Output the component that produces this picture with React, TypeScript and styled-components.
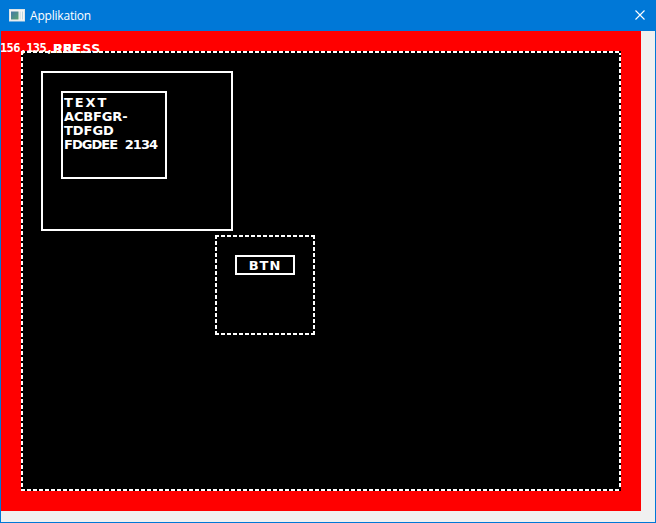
import React from "react";
import styled, { createGlobalStyle } from "styled-components";

const GlobalStyle = createGlobalStyle`
  html, body { margin: 0; background: #f0f0f0; }
  * { box-sizing: border-box; }
`;

const Window = styled.div`
  width: 656px;
  height: 523px;
  display: flex;
  flex-direction: column;
  background: #f0f0f0;
  border: 1px solid #0078d7;
  overflow: hidden;
`;

const TitleBar = styled.header`
  height: 30px;
  flex: none;
  display: flex;
  align-items: center;
  padding: 0 9px 0 8px;
  background: #0078d7;
  color: #fff;
`;

const Title = styled.h1`
  flex: 1;
  margin: 0 0 0 5px;
  font: 400 12px/16px "Open Sans", "Noto Sans", sans-serif;
  letter-spacing: -0.2px;
`;

const CloseButton = styled.button`
  width: 12px;
  height: 12px;
  margin-top: -2px;
  padding: 0;
  border: 0;
  background: none;
  display: flex;
`;

const Canvas = styled.main`
  position: relative;
  display: flex;
  width: 640px;
  height: 480px;
  padding: 20px;
  background: #f00;
  font-family: "DejaVu Sans", sans-serif;
  font-weight: 700;
  font-size: 13px;
  color: #fff;
`;

const dashes = (angle: number) =>
  `repeating-linear-gradient(${angle}deg, #fff 0 4px, #000 4px 6px)`;

const DashedFrame = styled.section`
  padding: 20px;
  background:
    ${dashes(90)} 0 0 / 100% 2px no-repeat,
    ${dashes(90)} 0 100% / 100% 2px no-repeat,
    ${dashes(180)} 0 0 / 2px 100% no-repeat,
    ${dashes(180)} 100% 0 / 2px 100% no-repeat,
    #000;
`;

const RootPanel = styled(DashedFrame)`
  flex: 1;
  display: flex;
  flex-direction: column;
  align-items: flex-start;
  gap: 4px;
`;

const ButtonPanel = styled(DashedFrame)`
  width: 100px;
  height: 100px;
  margin-left: 174px;
`;

const SolidFrame = styled.section`
  width: 192px;
  height: 160px;
  padding: 18px;
  border: 2px solid #fff;
  background: #000;
`;

const TextArea = styled.div`
  width: 106px;
  height: 88px;
  padding: 2px 0 0 1px;
  border: 2px solid #fff;
`;

const Line = styled.div<{ $spacing: number }>`
  height: 14px;
  line-height: 15px;
  white-space: pre;
  letter-spacing: ${(p) => p.$spacing}px;
  word-spacing: 4px;
`;

const PanelButton = styled.button`
  width: 60px;
  height: 20px;
  display: flex;
  align-items: center;
  justify-content: center;
  padding: 1px 0 0 0;
  border: 2px solid #fff;
  background: #000;
  color: #fff;
  font: inherit;
  line-height: 15px;
  letter-spacing: 1px;
`;

const StatusOverlay = styled.div`
  position: absolute;
  inset: 10px auto auto -1px;
  display: grid;
  grid-template-columns: 53px auto;
  font-size: 12.5px;
  line-height: 15px;
  white-space: pre;
`;

const Coordinates = styled.span`
  font-family: "DejaVu Sans Mono", monospace;
  font-size: 12px;
  letter-spacing: -0.65px;
`;

const Status = styled.span<{ $spacing: number }>`
  grid-area: 1 / 2;
  letter-spacing: ${(p) => p.$spacing}px;
`;

const AppIcon = () => (
  <svg width="16" height="16" viewBox="0 0 16 16">
    <defs>
      <linearGradient id="pane" x1="0" y1="0" x2="1" y2="1">
        <stop offset="0" stopColor="#4479a8" />
        <stop offset="1" stopColor="#58a470" />
      </linearGradient>
    </defs>
    <rect x="0.5" y="1.5" width="15" height="11.5" fill="#f4f4f4" stroke="#dce4e8" />
    <rect x="2" y="3.5" width="7.5" height="8" fill="url(#pane)" />
    <rect x="10.5" y="3.5" width="1.5" height="8" fill="#d4e4e8" />
    <rect x="13" y="3.5" width="1" height="8" fill="#bcd6dc" />
  </svg>
);

export default function App() {
  return (
    <>
      <GlobalStyle />
      <Window>
        <TitleBar>
          <AppIcon />
          <Title>Applikation</Title>
          <CloseButton aria-label="Close">
            <svg width="12" height="12" viewBox="0 0 12 12">
              <path d="M1.5 1.5 L10.5 10.5 M10.5 1.5 L1.5 10.5" stroke="#fff" strokeWidth="1.1" />
            </svg>
          </CloseButton>
        </TitleBar>
        <Canvas>
          <RootPanel>
            <SolidFrame>
              <TextArea>
                <Line $spacing={1.9}>TEXT</Line>
                <Line $spacing={-0.15}>ACBFGR-</Line>
                <Line $spacing={-0.05}>TDFGD</Line>
                <Line $spacing={-0.95}>FDGDEE 2134</Line>
              </TextArea>
            </SolidFrame>
            <ButtonPanel>
              <PanelButton>BTN</PanelButton>
            </ButtonPanel>
          </RootPanel>
          <StatusOverlay>
            <Coordinates>156,135,</Coordinates>
            <Status $spacing={0.6}>PRESS</Status>
            <Status $spacing={0.3}>REL</Status>
          </StatusOverlay>
        </Canvas>
      </Window>
    </>
  );
}
